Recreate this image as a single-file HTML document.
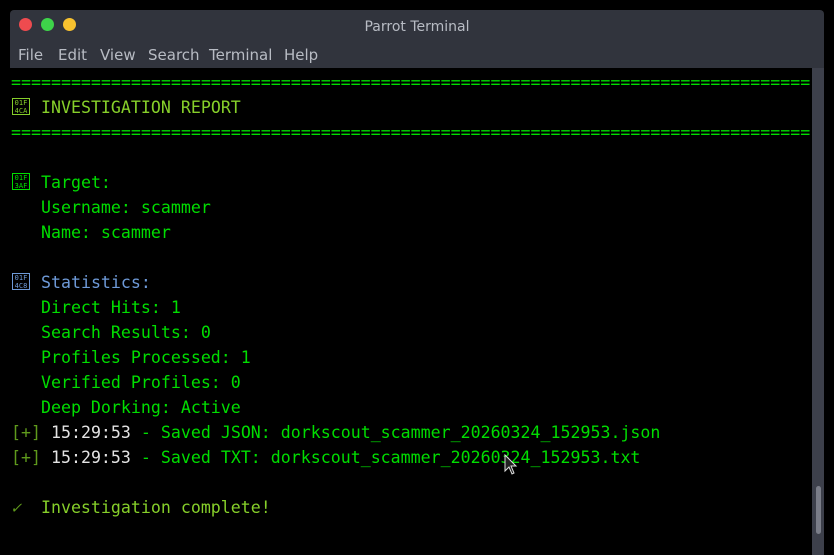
<!DOCTYPE html>
<html><head><style>
body{margin:0;width:834px;height:555px;background:#000;overflow:hidden;position:relative;font-family:"DejaVu Sans Mono","Liberation Mono",monospace}
.win{position:absolute;left:10px;top:10px;width:814px;height:545px;background:#000}
.tb{position:absolute;left:0;top:0;width:814px;height:58px;background:#31343d;border-radius:4px 4px 0 0}
.dot{position:absolute;top:8px;width:13px;height:13px;border-radius:50%}
.title{position:absolute;left:0;right:0;top:9px;text-align:center;color:#b8bcc4;font:14px "DejaVu Sans","Liberation Sans",sans-serif}
.menu{position:absolute;top:36px;color:#b8bcc4;font:15px "DejaVu Sans","Liberation Sans",sans-serif}
.sb{position:absolute;left:802px;top:58px;width:12px;height:487px;background:#3d404b}
.th{position:absolute;left:806px;top:476px;width:5px;height:48px;background:#7a7d88;border-radius:3px}
.term{position:absolute;left:11px;top:70px;font-size:16.6px;line-height:25px;color:#00dd00}
.l{height:25px;white-space:pre}
.box{display:inline-block;width:20px;height:18px;vertical-align:-3px;position:relative}
.box span{position:absolute;left:1px;top:0;width:18px;height:17px;border:1px solid currentColor;box-sizing:border-box;font-size:7px;line-height:7.5px;text-align:center;padding-top:1px}
.y{color:#86cf2a}.b{color:#6e9ad8}.o{color:#5f9a1c}.w{color:#e4e4e4}
</style></head><body>
<div class="win">
<div class="tb">
<div class="dot" style="left:9px;background:#ee4b4f"></div>
<div class="dot" style="left:31px;background:#3ed44a"></div>
<div class="dot" style="left:53px;background:#f8c22f"></div>
<div class="title">Parrot Terminal</div>
<div class="menu" style="left:8px">File</div>
<div class="menu" style="left:48px">Edit</div>
<div class="menu" style="left:90px">View</div>
<div class="menu" style="left:138px">Search</div>
<div class="menu" style="left:199px">Terminal</div>
<div class="menu" style="left:274px">Help</div>
</div>
<div class="sb"></div><div class="th"></div>
</div>
<div class="term"><div class="l">================================================================================</div><div class="l y"><span class="box"><span>01F<br>4CA</span></span> INVESTIGATION REPORT</div><div class="l">================================================================================</div><div class="l"> </div><div class="l"><span class="box"><span>01F<br>3AF</span></span> Target:</div><div class="l">   Username: scammer</div><div class="l">   Name: scammer</div><div class="l"> </div><div class="l b"><span class="box"><span>01F<br>4C8</span></span> Statistics:</div><div class="l">   Direct Hits: 1</div><div class="l">   Search Results: 0</div><div class="l">   Profiles Processed: 1</div><div class="l">   Verified Profiles: 0</div><div class="l">   Deep Dorking: Active</div><div class="l"><span class="o">[+]</span> <span class="w">15:29:53</span> - Saved JSON: dorkscout_scammer_20260324_152953.json</div><div class="l"><span class="o">[+]</span> <span class="w">15:29:53</span> - Saved TXT: dorkscout_scammer_20260324_152953.txt</div><div class="l"> </div><div class="l y"><span class="o" style="font-style:italic">✓ </span> Investigation complete!</div></div>
<svg style="position:absolute;left:504px;top:454px" width="14" height="22" viewBox="0 0 14 22"><path d="M1 1 L1 17 L5 13 L8 20 L10 19 L7 12 L12 12 Z" fill="#222" stroke="#ddd" stroke-width="1"/></svg>
</body></html>
